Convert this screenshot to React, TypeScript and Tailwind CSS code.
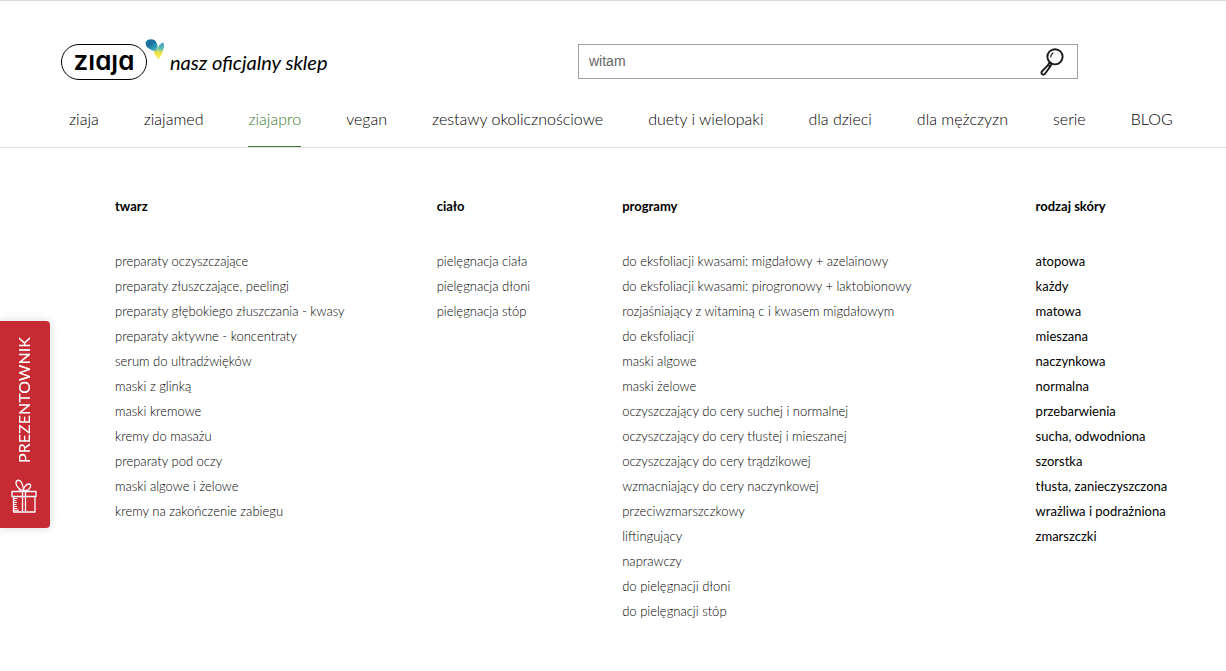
import { useState } from "react";

type Column = { title: string; items: string[]; strong?: boolean };

const NAV = [
  "ziaja",
  "ziajamed",
  "ziajapro",
  "vegan",
  "zestawy okolicznościowe",
  "duety i wielopaki",
  "dla dzieci",
  "dla mężczyzn",
  "serie",
  "BLOG",
];

const COLUMNS: Column[] = [
  {
    title: "twarz",
    items: [
      "preparaty oczyszczające",
      "preparaty złuszczające, peelingi",
      "preparaty głębokiego złuszczania - kwasy",
      "preparaty aktywne - koncentraty",
      "serum do ultradźwięków",
      "maski z glinką",
      "maski kremowe",
      "kremy do masażu",
      "preparaty pod oczy",
      "maski algowe i żelowe",
      "kremy na zakończenie zabiegu",
    ],
  },
  {
    title: "ciało",
    items: ["pielęgnacja ciała", "pielęgnacja dłoni", "pielęgnacja stóp"],
  },
  {
    title: "programy",
    items: [
      "do eksfoliacji kwasami: migdałowy + azelainowy",
      "do eksfoliacji kwasami: pirogronowy + laktobionowy",
      "rozjaśniający z witaminą c i kwasem migdałowym",
      "do eksfoliacji",
      "maski algowe",
      "maski żelowe",
      "oczyszczający do cery suchej i normalnej",
      "oczyszczający do cery tłustej i mieszanej",
      "oczyszczający do cery trądzikowej",
      "wzmacniający do cery naczynkowej",
      "przeciwzmarszczkowy",
      "liftingujący",
      "naprawczy",
      "do pielęgnacji dłoni",
      "do pielęgnacji stóp",
    ],
  },
  {
    title: "rodzaj skóry",
    strong: true,
    items: [
      "atopowa",
      "każdy",
      "matowa",
      "mieszana",
      "naczynkowa",
      "normalna",
      "przebarwienia",
      "sucha, odwodniona",
      "szorstka",
      "tłusta, zanieczyszczona",
      "wrażliwa i podrażniona",
      "zmarszczki",
    ],
  },
];

function Butterfly() {
  return (
    <svg className="absolute -top-1.5 left-[84px] h-6 w-5" viewBox="0 0 20 24" aria-hidden="true">
      <defs>
        <linearGradient id="wing" x1="0" y1="0" x2="0.8" y2="1">
          <stop offset="0" stopColor="#1b7fb0" />
          <stop offset="0.4" stopColor="#1d6d9c" />
          <stop offset="0.8" stopColor="#2d9fb8" />
          <stop offset="1" stopColor="#7fc4a0" />
        </linearGradient>
        <linearGradient id="wing2" x1="0.8" y1="0" x2="0.2" y2="1">
          <stop offset="0" stopColor="#2f9cba" />
          <stop offset="0.6" stopColor="#5fb9b4" />
          <stop offset="1" stopColor="#b9d87c" />
        </linearGradient>
        <linearGradient id="tail" x1="0" y1="0" x2="0" y2="1">
          <stop offset="0" stopColor="#c9dd6c" />
          <stop offset="0.4" stopColor="#f2e63e" />
          <stop offset="1" stopColor="#f6ea72" />
        </linearGradient>
      </defs>
      <path d="M8.500 12.300C11.500 13 14.500 13 18 12C17.800 16 15.500 18.500 13.500 21.500C11.800 19 9 16.500 8.500 12.300Z" fill="url(#tail)" />
      <path d="M1 3.500C3 .5 8.500 .2 11 3.500C12.500 5.800 12.800 9 12.700 13C9.500 13.200 6.500 12.800 5 11C2.500 10.500 -.3 7 1 3.500Z" fill="url(#wing)" />
      <path d="M12.500 13C12 9.500 14.500 5.500 18.500 4.500C19.200 7.500 19.200 10.500 17.500 12.500C16 13.300 14 13.300 12.500 13Z" fill="url(#wing2)" />
    </svg>
  );
}

function Logo() {
  return (
    <a href="#" className="relative flex h-9 items-center text-black">
      <span className="flex h-9 w-[86px] items-center justify-center rounded-full border border-black pb-0.5 font-['Inter'] text-[26px] leading-none font-semibold [font-feature-settings:'cv11']">
        zıaȷa
      </span>
      <Butterfly />
      <span className="ml-[23px] font-['Lato'] text-xl leading-none italic whitespace-nowrap">
        nasz oficjalny sklep
      </span>
    </a>
  );
}

function Magnifier() {
  return (
    <svg className="h-7 w-6" viewBox="0 0 24 28" fill="none" stroke="#1a1a1a" strokeLinecap="round" strokeLinejoin="round" aria-hidden="true">
      <circle cx="15" cy="8.800" r="7.600" strokeWidth="1.900" />
      <path d="M10.800 9C10.800 7 11.600 5.800 13 5" strokeWidth="1.200" />
      <path d="M9.600 14.200L8 17.200L1.800 23.500C.6 25.800 3.200 27.600 5 25.800L10.200 18.500L11.600 15.800Z" strokeWidth="1.900" />
      <path d="M8 17.200L10.200 18.500" strokeWidth="1.500" />
    </svg>
  );
}

function Gift() {
  return (
    <svg className="h-[34px] w-[26px]" viewBox="0 0 26 34" fill="none" stroke="#fff" strokeWidth="1.300" strokeLinecap="round" strokeLinejoin="round" aria-hidden="true">
      <path d="M1 12.500H25V17.500H1ZM2.500 17.500V33H24V17.500M11.500 12.500V33M14.500 12.500V33" />
      <path d="M12.500 12C9 11 4.500 7 5 3.500C5.500 .5 9 .5 10.500 3.500C11.800 6 12.500 9 12.500 12Z" />
      <path d="M12.500 12C12.500 8.500 15 5 18 5C20.500 5.200 20 8.800 17.500 10.500C16 11.500 14 11.800 12.500 12Z" />
      <path d="M12.500 12L8 12.300L8.500 9.800M13 12L19 12.300" strokeWidth="0.900" />
      <path d="M3 19.500H6M3 21.500H5M3 23.500H5.500M3 25.500H5M3 27.500H5.500M3 29.500H6M3 31.300H7.500" strokeWidth="1" />
    </svg>
  );
}

export default function App() {
  const [query, setQuery] = useState("witam");
  return (
    <div className="min-h-screen border-t border-[#dcdcdc] bg-white font-['Lato',sans-serif] text-black">
      <header className="border-b border-[#e0e0e0]">
        <div className="flex items-start pt-[43px] pl-[61px]">
          <div className="w-[517px] shrink-0">
            <Logo />
          </div>
          <form
            className="flex h-[35px] w-[500px] items-center border border-[#a0a0a0] pr-[13px] pl-2.5"
            onSubmit={(e) => e.preventDefault()}
          >
            <input
              aria-label="szukaj"
              value={query}
              onChange={(e) => setQuery(e.target.value)}
              className="min-w-0 flex-1 pb-0.5 font-['Liberation_Sans',sans-serif] text-sm text-[#666] outline-none"
            />
            <button type="submit" aria-label="szukaj">
              <Magnifier />
            </button>
          </form>
        </div>
        <nav className="mt-[15px] flex gap-[45px] pl-[69px] font-light whitespace-nowrap">
          {NAV.map((label) => (
            <a
              key={label}
              href="#"
              className={
                label === "ziajapro"
                  ? "border-b border-[#3c7a35] pt-3 pb-[15px] leading-6 text-[#3c7a35]"
                  : "border-b border-transparent pt-3 pb-[15px] leading-6"
              }
            >
              {label}
            </a>
          ))}
        </nav>
      </header>

      <main className="flex gap-[92px] pt-[46px] pl-[115px] text-[13px] leading-[25px] whitespace-nowrap">
        {COLUMNS.map((col) => (
          <section key={col.title} className="last:ml-8">
            <h2 className="mb-[30px] font-bold">{col.title}</h2>
            <ul className={col.strong ? "font-normal" : "font-light"}>
              {col.items.map((item) => (
                <li key={item}>
                  <a href="#">{item}</a>
                </li>
              ))}
            </ul>
          </section>
        ))}
      </main>

      <a
        href="#"
        className="fixed top-[321px] left-0 flex h-[207px] w-[50px] flex-col items-center justify-between rounded-r bg-[#c62a32] pt-4 pr-[3px] pb-[15px] text-white shadow-[0_0_10px_rgba(0,0,0,0.15)]"
      >
        <span className="rotate-180 text-base leading-6 font-medium [writing-mode:vertical-rl]">PREZENTOWNIK</span>
        <Gift />
      </a>
    </div>
  );
}
